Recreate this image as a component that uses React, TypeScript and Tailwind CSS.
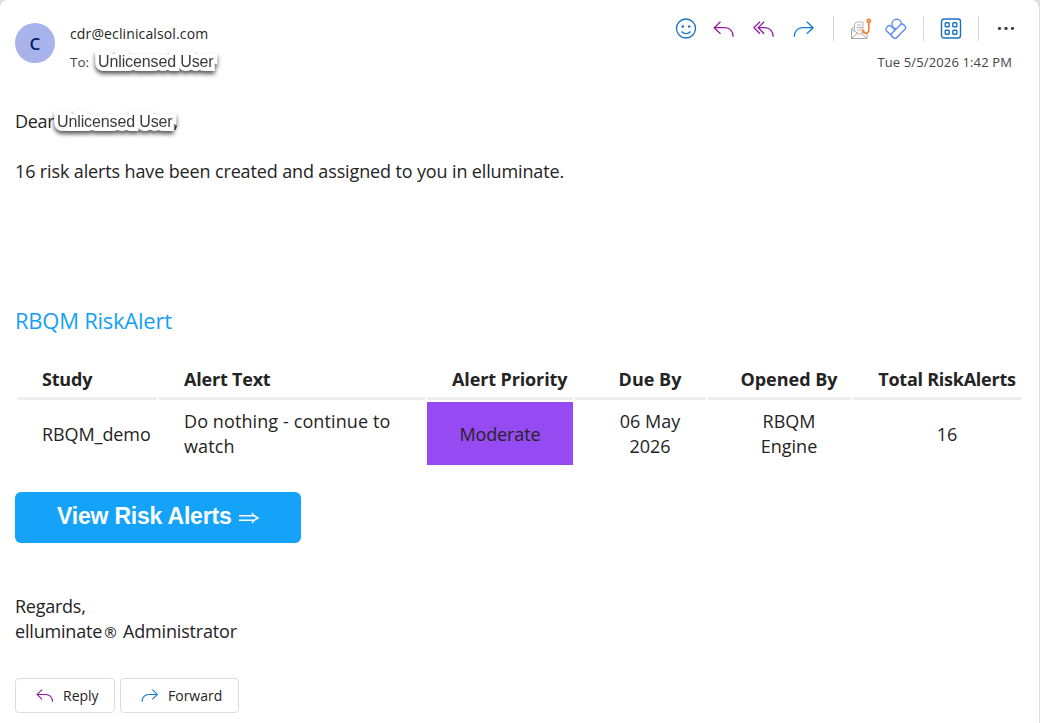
import React from "react";

type IconProps = { className?: string };

const ReplyIcon = ({ className }: IconProps) => (
  <svg viewBox="0 0 22 16" fill="none" stroke="#8f1a9e" strokeWidth="1.3" className={className}>
    <path d="M7.5 .7 1.2 6.7l6.3 6M1.2 6.7H12c4.600 0 8.200 3.600 8.200 9" />
  </svg>
);

const ReplyAllIcon = ({ className }: IconProps) => (
  <svg viewBox="0 0 22 16" fill="none" stroke="#8f1a9e" strokeWidth="1.3" className={className}>
    <path d="M7 .7 1 6.7l6 6M11.200 .7l-6 6 6 6M5.200 6.7H12c4.600 0 8.200 3.600 8.200 9" />
  </svg>
);

const ForwardIcon = ({ className }: IconProps) => (
  <svg viewBox="0 0 22 16" fill="none" stroke="#0f7bd4" strokeWidth="1.3" className={className}>
    <path d="M13.800 .7l6.300 6-6.300 6M20.100 6.7H9.500c-4.600 0-8.200 3.600-8.200 9" />
  </svg>
);

const SmileIcon = () => (
  <svg viewBox="0 0 22 22" className="size-[22px]" fill="none" stroke="#1a72bf" strokeWidth="1.3">
    <circle cx="11" cy="10.500" r="9.500" />
    <path d="M6.500 13.500c2.400 2.900 6.600 2.900 9 0" />
    <circle cx="7.800" cy="8.500" r="1.300" fill="#1a72bf" stroke="none" />
    <circle cx="14.200" cy="8.500" r="1.300" fill="#1a72bf" stroke="none" />
  </svg>
);

const PhishIcon = () => (
  <svg viewBox="0 0 22 22" className="size-[22px]" fill="none">
    <path d="M1.500 11v9.500h15.500V15M1.500 11l3-2.500M1.500 11l8 5.500 3-2M1.500 20.500l6-5.500M17 20.500l-5.500-5" stroke="#a8a8a8" />
    <path d="M4.500 13V6.500l2-2.500h6.500v7M7 7h4M6.500 9.500h6M7 12h4" stroke="#b4b4b4" />
    <circle cx="18.800" cy="3" r="1.600" stroke="#f97d28" strokeWidth="1.600" />
    <path d="M18.800 4.700v7c0 4.500-6 4.500-6.300 .6l2 1.500" stroke="#f97d28" strokeWidth="1.600" />
  </svg>
);

const RibbonIcon = () => (
  <svg viewBox="0 0 22 22" className="size-[22px]" fill="#fff" stroke="#5b8fef" strokeWidth="1.400">
    <circle cx="11.700" cy="6" r="4.700" />
    <rect x=".15" y="10.750" width="14.200" height="6.400" rx="2.400" transform="rotate(45 7.250 13.950)" />
    <rect x="5.350" y="9.950" width="16.400" height="6.400" rx="2.400" transform="rotate(-45 13.550 13.150)" />
  </svg>
);

const AppsIcon = () => (
  <svg viewBox="0 0 22 22" className="size-[22px]" fill="none" stroke="#1a72bf" strokeWidth="1.400">
    <rect x="1.500" y="1" width="19" height="19" rx="2.500" />
    <rect x="5.200" y="4.700" width="4" height="4" rx=".8" />
    <rect x="12.800" y="4.700" width="4" height="4" rx=".8" />
    <rect x="5.200" y="12.300" width="4" height="4" rx=".8" />
    <rect x="12.800" y="12.300" width="4" height="4" rx=".8" />
  </svg>
);

const MoreIcon = () => (
  <svg viewBox="0 0 18 4" className="ml-[18px] h-1 w-[18px]" fill="#3a3a3a">
    <circle cx="2.500" cy="1.500" r="1.600" />
    <circle cx="9" cy="1.500" r="1.600" />
    <circle cx="15.500" cy="1.500" r="1.600" />
  </svg>
);

const Divider = ({ className }: IconProps) => <div className={`h-[25px] w-px bg-[#d6d6d6] ${className}`} />;

const Recipient = () => (
  <span className="font-['Liberation_Sans',Arial,sans-serif] text-[16px] tracking-[-0.12px] text-[#3a3a3a] [-webkit-text-stroke:8px_white] [paint-order:stroke_fill] [stroke-linejoin:round] drop-shadow-[0_3px_2px_rgba(0,0,0,0.65)]">
    Unlicensed User
  </span>
);

const th = "h-9 whitespace-nowrap border-b-[3px] border-[#eee] p-0 pb-[5px] pl-[25px] align-bottom font-bold";
const thCenter = `${th} pr-[6px] text-center`;
const td = "h-[63px] pb-0 pl-[25px] pr-[6px] align-middle";

export default function App() {
  return (
    <div className="h-[723px] w-[1040px] overflow-hidden bg-[#dedede] font-['Open_Sans','Noto_Sans',sans-serif] text-[18px] leading-[25px] text-[#242424]">
      <div className="flex h-full w-[1039px] flex-col rounded-t-lg bg-white pl-[15px]">
        <header className="flex h-[109px] shrink-0">
          <div className="mt-[23px] flex size-10 items-center justify-center rounded-full bg-[#a7b3ea] text-[17px] font-semibold text-[#001b6b]">
            C
          </div>
          <div className="ml-[15px] mt-[24px] grow text-[14px] leading-5">
            <div className="tracking-[0.13px]">cdr@eclinicalsol.com</div>
            <div className="mt-2 flex items-center text-[#444]">
              <span className="w-[28px] text-[13.500px]">To:</span>
              <Recipient />
            </div>
          </div>
          <div className="mr-[24px] mt-4 flex flex-col items-end">
            <div className="flex h-[25px] items-center">
              <SmileIcon />
              <ReplyIcon className="ml-4 h-4 w-[22px]" />
              <ReplyAllIcon className="ml-[18px] h-4 w-[22px]" />
              <ForwardIcon className="ml-[18px] h-4 w-[22px]" />
              <Divider className="ml-[18px] mr-4" />
              <PhishIcon />
              <div className="w-[13px]" />
              <RibbonIcon />
              <Divider className="mx-4" />
              <AppsIcon />
              <Divider className="ml-4" />
              <MoreIcon />
            </div>
            <div className="mr-[3px] mt-[11px] text-[13px] leading-5 tracking-[0.13px] text-[#444]">Tue 5/5/2026 1:42 PM</div>
          </div>
        </header>

        <p className="flex">
          <span className="w-[42px] tracking-[-0.3px]">Dear</span>
          <Recipient />
          <span className="relative pl-px">,</span>
        </p>
        <p className="mt-[25px] tracking-[-0.135px]">16 risk alerts have been created and assigned to you in elluminate.</p>
        <h2 className="mt-[121px] text-[22px] leading-[30px] tracking-[-0.25px] text-[#14a0f8]">RBQM RiskAlert</h2>

        <table className="mt-[27px] w-[1009px] table-fixed border-separate border-spacing-[2px] text-left">
          <colgroup>
            <col className="w-[140px]" />
            <col className="w-[266px]" />
            <col className="w-[146px]" />
            <col className="w-[131px]" />
            <col className="w-[143px]" />
            <col className="w-[169px]" />
          </colgroup>
          <thead>
            <tr>
              <th className={`${th} tracking-[-0.2px]`}>Study</th>
              <th className={`${th} tracking-[-0.2px]`}>Alert Text</th>
              <th className={`${thCenter} tracking-[-0.12px]`}>Alert Priority</th>
              <th className={thCenter}>Due By</th>
              <th className={thCenter}>Opened By</th>
              <th className={`${thCenter} tracking-[-0.25px]`}>Total RiskAlerts</th>
            </tr>
          </thead>
          <tbody>
            <tr>
              <td className={`${td} pt-[2px] tracking-[-0.08px]`}>RBQM_demo</td>
              <td className={`${td} pt-0 tracking-[0.1px]`}>
                Do nothing - continue to
                <br />
                watch
              </td>
              <td className="h-[63px] bg-[#964af2] p-0 pt-[2px] text-center tracking-[-0.1px]">Moderate</td>
              <td className={`${td} pt-0 text-center`}>
                06 May
                <br />
                2026
              </td>
              <td className={`${td} pt-0 text-center`}>
                RBQM
                <br />
                Engine
              </td>
              <td className={`${td} pt-[2px] text-center`}>16</td>
            </tr>
          </tbody>
        </table>

        <button className="mt-[25px] flex h-[51px] w-[286px] shrink-0 items-center rounded-md bg-[#15a3f9] pb-[3px] pl-[42px] font-['Liberation_Sans',Arial,sans-serif] text-[23px] font-bold text-white">
          <span className="tracking-[-0.2px]">View Risk Alerts</span>
          <svg viewBox="0 0 20 12" className="ml-[7px] mt-[3px] h-3 w-5" fill="none" stroke="#fff" strokeWidth="1.500">
            <path d="M0 3.800h16M0 8.200h16M13 .8c1.500 2.600 3.400 4.300 6 5.200-2.600 .9-4.500 2.600-6 5.200" />
          </svg>
        </button>

        <p className="mt-[51px]">
          <span className="tracking-[-0.25px]">Regards,</span>
          <br />
          <span className="tracking-[-0.18px]">
            elluminate<span className="mx-[2px] text-[15px] leading-none">®</span> Administrator
          </span>
        </p>

        <div className="mt-[34px] flex gap-[5px] text-[14px]">
          <button className="flex h-[35px] w-[100px] items-center rounded-[4px] border border-[#dcdcdc] pl-5">
            <ReplyIcon className="h-[13px] w-[18px]" />
            <span className="ml-[9px]">Reply</span>
          </button>
          <button className="flex h-[35px] w-[119px] items-center rounded-[4px] border border-[#dcdcdc] pl-5">
            <ForwardIcon className="h-[13px] w-[18px]" />
            <span className="ml-[9px]">Forward</span>
          </button>
        </div>
      </div>
    </div>
  );
}
